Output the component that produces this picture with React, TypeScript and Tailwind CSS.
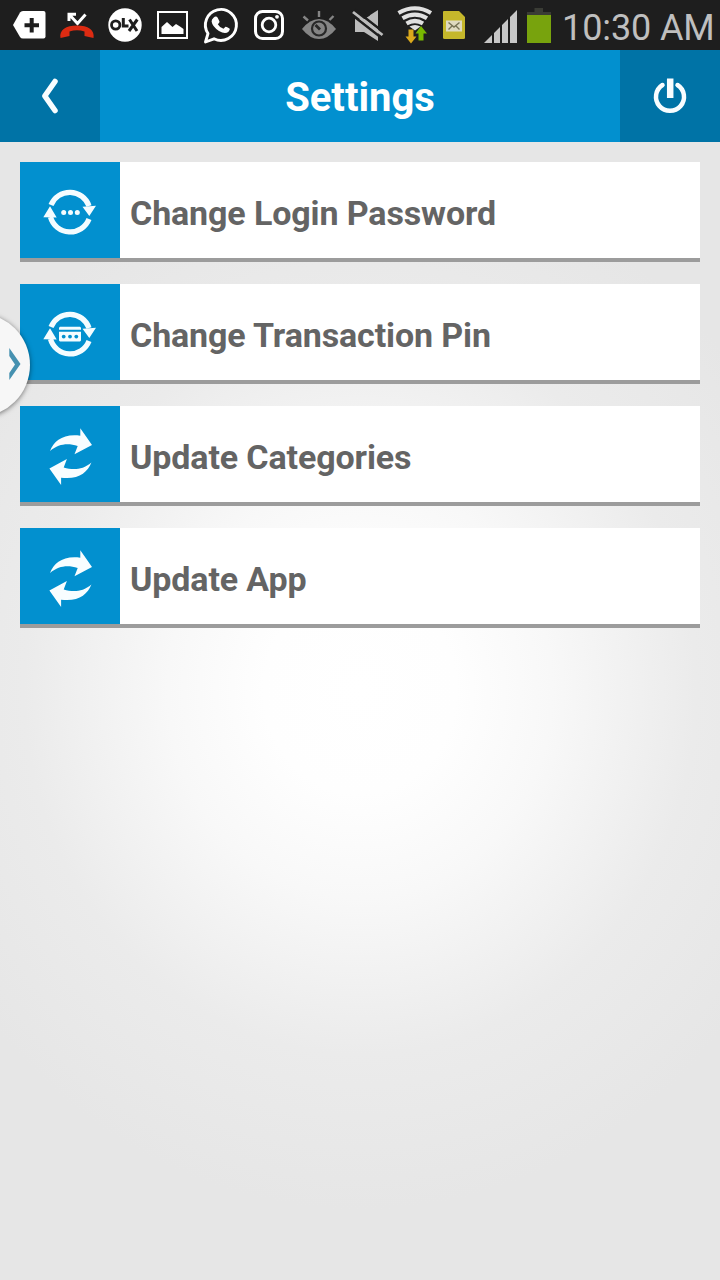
import type { ReactNode } from "react";

function StatusIcon({ x, w, className, children }: { x: number; w: number; className: string; children: ReactNode }) {
  return (
    <svg viewBox={`${x} 0 ${w} 50`} className={`h-[50px] shrink-0 ${className}`} fill="none">
      {children}
    </svg>
  );
}

function StatusBar() {
  return (
    <header className="flex h-[50px] overflow-hidden bg-[#1e1e1e]">
      <StatusIcon x={0} w={52} className="w-[52px]">
        <path d="M13 25 20 12.500Q21 11 23 11H43.500Q45.500 11 45.500 13V36.500Q45.500 38.500 43.500 38.500H23Q21 38.500 20 37Z" fill="#fff" />
        <path d="M31.700 18V32.500M24.500 25.300H39" stroke="#1e1e1e" strokeWidth="4" />
      </StatusIcon>
      <StatusIcon x={52} w={48} className="w-[48px]">
        <path d="M69 21V14.300H76M69.500 14.800 77.500 23.500 85.500 14.500" stroke="#fff" strokeWidth="3" />
        <path d="M60.500 38C59 30 66 25.500 77 25.500S95 30 93.500 38L84.500 36V31.500Q77 29 69.500 31.500V36Z" fill="#dc2b12" />
      </StatusIcon>
      <StatusIcon x={100} w={50} className="w-[50px]">
        <circle cx="125" cy="25" r="16.700" fill="#fff" />
        <circle cx="115.700" cy="25" r="4.200" stroke="#1e1e1e" strokeWidth="2.800" />
        <path d="M123.300 18V26H128.500M129.500 19.500 137 31M137.300 19.500 129 31" stroke="#1e1e1e" strokeWidth="3" />
      </StatusIcon>
      <StatusIcon x={150} w={46} className="w-[46px]">
        <rect x="158" y="12" width="29" height="26" stroke="#fff" strokeWidth="2" />
        <path d="M161.500 34V27L167 22 172.500 27 176 24 180 26.500 183.500 29V34Z" fill="#fff" />
      </StatusIcon>
      <StatusIcon x={196} w={49} className="w-[49px]">
        <path d="M205.500 42 208 33.500A15.500 15.500 0 1 1 214 38.800Z" stroke="#fff" strokeWidth="2.900" strokeLinejoin="round" />
        <path d="M213.500 17.700Q216 15.300 217.700 17.700L219.500 21.500Q219.800 22.500 217.800 24.300 219.500 27.500 223.500 28.700L225.500 26.800Q226.200 26.300 229.500 28.500 230.500 29.500 228.500 31.800 225 34.500 219 31 212.300 26.500 211.600 21.500 211.600 19.200 213.500 17.700Z" fill="#fff" />
      </StatusIcon>
      <StatusIcon x={245} w={47} className="w-[47px]">
        <rect x="255.500" y="11.500" width="27" height="27" rx="7" stroke="#fff" strokeWidth="3" />
        <circle cx="269" cy="25" r="6.800" stroke="#fff" strokeWidth="2.800" />
        <circle cx="277" cy="16.800" r="1.900" fill="#fff" />
      </StatusIcon>
      <StatusIcon x={292} w={53} className="w-[53px]">
        <path d="M302 29Q310 19 319 19T336 29Q328 39 319 39T302 29Z" fill="#858585" />
        <circle cx="319" cy="28.500" r="7" stroke="#282828" strokeWidth="2.200" />
        <path d="M315.500 25 320 29.500" stroke="#282828" strokeWidth="2.800" />
        <path d="M303.500 16.500 308 20.500M319 11V17M333.500 16 329.500 20" stroke="#858585" strokeWidth="2.400" />
      </StatusIcon>
      <StatusIcon x={345} w={46} className="w-[46px]">
        <path d="M355 19H364L378 10V41L364 32H355Z" fill="#bcbcbc" />
        <path d="M357 12V18.500H365L370 15.500 363 10Z" fill="#1e1e1e" />
        <path d="M354.500 9.500 384 32.500M351.500 14.500 381 37.500" stroke="#1e1e1e" strokeWidth="2.400" />
        <path d="M353 12 382.500 35" stroke="#bcbcbc" strokeWidth="2.800" />
      </StatusIcon>
      <StatusIcon x={391} w={45} className="w-[45px]">
        <path d="M398.500 13Q415 3.500 431 13M402.500 18.300Q415 11 427 18.300M406.500 23.500Q415 18.500 423 23.500" stroke="#e0e0e0" strokeWidth="4.200" />
        <path d="M409.500 26.500Q415 23.500 420.500 26.500L415 30.500Z" fill="#e0e0e0" />
        <path d="M408.500 29.500H413.500V36.500H416.500L411 43.500 405.500 36.500H408.500Z" fill="#dba91c" />
        <path d="M418.500 40.500H423.500V33.500H427L421 26 415.500 33.500H418.500Z" fill="#78b800" />
      </StatusIcon>
      <StatusIcon x={436} w={40} className="w-[40px]">
        <path d="M444 11H459L465 17V37.500Q465 39 463.500 39H444.500Q443 39 443 37.500V12Q443 11 444 11Z" fill="#c5b72b" />
        <path d="M446 20.500H462V31.500H446Z" fill="#dfdac0" />
        <path d="M448.500 22.500 454 27 459.500 22.500M448.500 29.500 452 26M459.500 29.500 456 26" stroke="#777355" strokeWidth="1.400" />
      </StatusIcon>
      <StatusIcon x={476} w={46} className="w-[46px]">
        <path d="M484 43 492 35V43ZM494 33 500 27V43H494ZM502 25 508 19V43H502ZM510 17 517 10V43H510Z" fill="#c7c7c7" />
      </StatusIcon>
      <StatusIcon x={522} w={38} className="w-[38px]">
        <path d="M527 12H534.500V8H543V12H551V16H527Z" fill="#3a3c35" />
        <path d="M527 15H551V43H527Z" fill="#78a30d" />
      </StatusIcon>
      <time className="mt-[6px] ml-[2px] font-[Roboto,sans-serif] text-[36px] leading-[44px] tracking-[-0.100px] whitespace-nowrap text-[#bfbfbf]">10:30 AM</time>
    </header>
  );
}

function Cycle({ children }: { children: ReactNode }) {
  return (
    <svg viewBox="0 0 100 96" className="h-24 w-[100px]" fill="none">
      <path d="M31 43A20.300 20.300 0 0 1 69 44M30.500 55A20.300 20.300 0 0 0 69 57" stroke="#f4fcff" strokeWidth="5.300" />
      <path d="M62.500 44.700 76 43.700 69.300 54ZM30 44.300 36.700 55.500 23.300 55.300Z" fill="#f4fcff" />
      {children}
    </svg>
  );
}

function PasswordIcon() {
  return (
    <Cycle>
      <g fill="#f4fcff">
        <circle cx="43.700" cy="50.400" r="2.500" />
        <circle cx="50.500" cy="50.400" r="2.500" />
        <circle cx="57.300" cy="50.400" r="2.500" />
      </g>
    </Cycle>
  );
}

function PinIcon() {
  return (
    <Cycle>
      <path d="M40 42.700H60L61 43.700V45.700H39V43.700ZM39 47.700H61V56.500L60 57.500H40L39 56.500Z" fill="#f4fcff" />
      <g fill="#0290cf">
        <circle cx="43.700" cy="52.600" r="1.900" />
        <circle cx="50" cy="52.600" r="1.900" />
        <circle cx="56.300" cy="52.600" r="1.900" />
      </g>
    </Cycle>
  );
}

function UpdateIcon() {
  const arrow = "M30 45C34 35 43 27.500 60.300 29.700V22.300L72 39 54.500 48.300 57.700 40C48 37 39 37.500 30 45Z";
  return (
    <svg viewBox="0 0 100 96" className="h-24 w-[100px]" fill="#f8fdff">
      <path d={arrow} />
      <path d={arrow} transform="rotate(180 50.700 50.700)" />
    </svg>
  );
}

const rows = [
  { label: "Change Login Password", icon: <PasswordIcon /> },
  { label: "Change Transaction Pin", icon: <PinIcon /> },
  { label: "Update Categories", icon: <UpdateIcon /> },
  { label: "Update App", icon: <UpdateIcon /> },
];

export default function App() {
  return (
    <div className="relative flex h-[1280px] w-[720px] flex-col overflow-hidden bg-[radial-gradient(ellipse_480px_520px_at_360px_690px,#ffffff_0%,#fefefe_20%,#f8f8f8_40%,#ebebeb_70%,#e6e6e6_100%)] font-[Roboto,sans-serif]">
      <StatusBar />
      <nav className="flex h-[92px] bg-[#0290cf] text-white">
        <button aria-label="Back" className="w-[100px] bg-[#0073a6]">
          <svg viewBox="0 0 100 92" className="h-[92px] w-[100px]" fill="none">
            <path d="M55 31.500 44.800 46 55 60.500" stroke="#f8fdff" strokeWidth="5.500" strokeLinecap="round" strokeLinejoin="round" />
          </svg>
        </button>
        <h1 className="flex-1 pt-[4px] text-center text-[40px] leading-[88px] font-bold">Settings</h1>
        <button aria-label="Log out" className="w-[100px] bg-[#0073a6]">
          <svg viewBox="0 0 100 92" className="h-[92px] w-[100px]" fill="none" stroke="#f8fdff">
            <path d="M42.500 35A14 14 0 1 0 57.500 35" strokeWidth="4.500" strokeLinecap="round" />
            <path d="M50.200 28.500V48" strokeWidth="6.500" />
          </svg>
        </button>
      </nav>
      <main className="flex flex-col gap-[22px] p-5">
        {rows.map((row) => (
          <button key={row.label} className="flex h-[100px] border-b-4 border-[#9c9c9c] bg-white text-left">
            <span className="h-24 w-[100px] bg-[#0290cf]">{row.icon}</span>
            <span className="pt-[3px] pl-[10px] text-[34px] leading-[96px] font-bold tracking-[-0.120px] whitespace-nowrap text-[#646464]">{row.label}</span>
          </button>
        ))}
      </main>
      <div className="absolute top-[313px] left-[-74px] h-[104px] w-[104px] rounded-full bg-[#f7f7f7] shadow-[0_1px_5px_rgba(0,0,0,0.5)]">
        <svg viewBox="0 0 104 104" className="h-full w-full">
          <path d="M83.300 35V43L89 51.500 83.300 60V67L94.500 51Z" fill="#4691b0" />
        </svg>
      </div>
    </div>
  );
}
